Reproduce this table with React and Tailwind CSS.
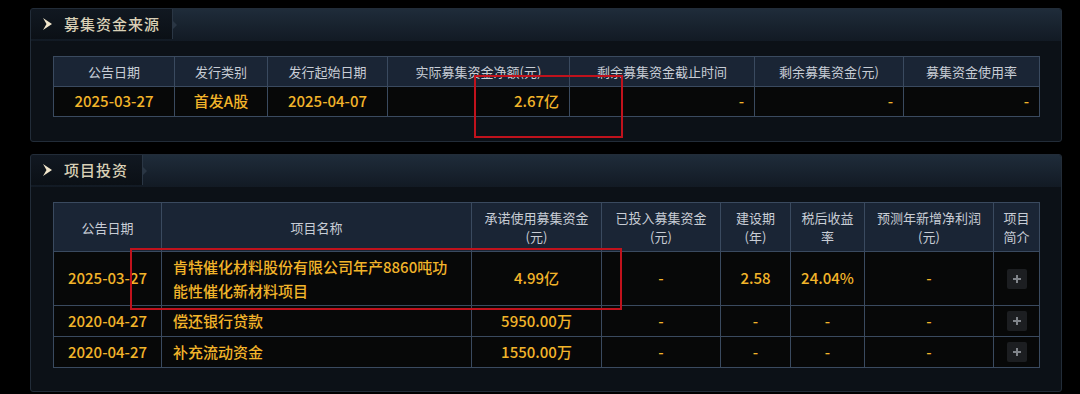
import React from "react";

const font = { fontFamily: '"Noto Sans CJK SC", "Noto Sans", sans-serif' };

function Plus() {
  return (
    <div className="mx-auto flex h-[20px] w-[20px] items-center justify-center rounded-[2px] bg-[#1c1e21]">
      <svg width="10" height="10" viewBox="0 0 10 10">
        <path d="M5 1v8M1 5h8" stroke="#80848a" strokeWidth="2" />
      </svg>
    </div>
  );
}

function PanelHeader({ title, tabW }) {
  return (
    <div className="relative flex h-[32px] bg-gradient-to-b from-[#1f2c3a] to-[#121a24]">
      <div
        className="relative flex h-[30px] items-center border-r border-[#2a3644] bg-gradient-to-b from-[#111821] to-[#0b1016] pl-[10px]"
        style={{ width: tabW }}
      >
        <svg width="14" height="14" viewBox="0 0 14 14" className="mr-[9px]">
          <path d="M2 1 L11 7 L2 13 L5.5 7 Z" fill="#f1e6cb" />
        </svg>
        <span className="text-[15px] font-medium tracking-[1px] text-[#d9d0b6]">{title}</span>
        <div className="absolute right-[-5px] top-[11px] h-0 w-0 border-y-[5px] border-l-[5px] border-y-transparent border-l-[#2a3644]" />
      </div>
    </div>
  );
}

const th = "border border-[#3a4a5f] bg-[#1a2535] text-[13px] font-normal text-[#c8cdd5] text-center leading-[19px]";
const td = "border border-[#3a4a5f] bg-[#070808] text-[15px] font-medium text-[#f2b42a]";

export default function App() {
  return (
    <div className="h-[394px] w-[1080px] overflow-hidden bg-black pt-[8px]" style={font}>
      {/* Panel 1 */}
      <div className="relative ml-[30px] h-[134px] w-[1032px] overflow-hidden rounded-[3px] border border-[#222c38] bg-[#0c1117]">
        <PanelHeader title="募集资金来源" tabW={142} />
        <div className="px-[22px] pt-[15px]">
          <table className="w-[986px] table-fixed border-collapse">
            <colgroup>
              <col className="w-[121px]" />
              <col className="w-[93px]" />
              <col className="w-[120px]" />
              <col className="w-[182px]" />
              <col className="w-[185px]" />
              <col className="w-[149px]" />
              <col className="w-[136px]" />
            </colgroup>
            <thead>
              <tr className="h-[30px]">
                <th className={th}>公告日期</th>
                <th className={th}>发行类别</th>
                <th className={th}>发行起始日期</th>
                <th className={th}>实际募集资金净额(元)</th>
                <th className={th}>剩余募集资金截止时间</th>
                <th className={th}>剩余募集资金(元)</th>
                <th className={th}>募集资金使用率</th>
              </tr>
            </thead>
            <tbody>
              <tr className="h-[30px]">
                <td className={td + " text-center"}>2025-03-27</td>
                <td className={td + " text-center"}>首发A股</td>
                <td className={td + " text-center"}>2025-04-07</td>
                <td className={td + " pr-[10px] text-right"}>2.67亿</td>
                <td className={td + " pr-[10px] text-right"}>-</td>
                <td className={td + " pr-[10px] text-right"}>-</td>
                <td className={td + " pr-[10px] text-right"}>-</td>
              </tr>
            </tbody>
          </table>
        </div>
        <div className="absolute left-[443px] top-[66px] h-[63px] w-[149px] border-2 border-[#c0121c]" />
      </div>

      {/* Panel 2 */}
      <div className="relative ml-[30px] mt-[12px] h-[238px] w-[1032px] overflow-hidden rounded-[3px] border border-[#222c38] bg-[#0c1117]">
        <PanelHeader title="项目投资" tabW={112} />
        <div className="px-[22px] pt-[15px]">
          <table className="w-[986px] table-fixed border-collapse">
            <colgroup>
              <col className="w-[108px]" />
              <col className="w-[310px]" />
              <col className="w-[130px]" />
              <col className="w-[119px]" />
              <col className="w-[70px]" />
              <col className="w-[74px]" />
              <col className="w-[129px]" />
              <col className="w-[46px]" />
            </colgroup>
            <thead>
              <tr className="h-[49px]">
                <th className={th}>公告日期</th>
                <th className={th}>项目名称</th>
                <th className={th}>承诺使用募集资金<br />(元)</th>
                <th className={th}>已投入募集资金<br />(元)</th>
                <th className={th}>建设期<br />(年)</th>
                <th className={th}>税后收益<br />率</th>
                <th className={th}>预测年新增净利润<br />(元)</th>
                <th className={th}>项目<br />简介</th>
              </tr>
            </thead>
            <tbody>
              <tr className="h-[54px]">
                <td className={td + " text-center text-[13px]"}>2025-03-27</td>
                <td className={td + " pl-[11px] text-left leading-[24px]"}>
                  肯特催化材料股份有限公司年产8860吨功<br />能性催化新材料项目
                </td>
                <td className={td + " text-center"}>4.99亿</td>
                <td className={td + " text-center"}>-</td>
                <td className={td + " text-center"}>2.58</td>
                <td className={td + " text-center"}>24.04%</td>
                <td className={td + " text-center"}>-</td>
                <td className={td}><Plus /></td>
              </tr>
              <tr className="h-[31px]">
                <td className={td + " text-center text-[13px]"}>2020-04-27</td>
                <td className={td + " pl-[11px] text-left"}>偿还银行贷款</td>
                <td className={td + " text-center"}>5950.00万</td>
                <td className={td + " text-center"}>-</td>
                <td className={td + " text-center"}>-</td>
                <td className={td + " text-center"}>-</td>
                <td className={td + " text-center"}>-</td>
                <td className={td}><Plus /></td>
              </tr>
              <tr className="h-[31px]">
                <td className={td + " text-center text-[13px]"}>2020-04-27</td>
                <td className={td + " pl-[11px] text-left"}>补充流动资金</td>
                <td className={td + " text-center"}>1550.00万</td>
                <td className={td + " text-center"}>-</td>
                <td className={td + " text-center"}>-</td>
                <td className={td + " text-center"}>-</td>
                <td className={td + " text-center"}>-</td>
                <td className={td}><Plus /></td>
              </tr>
            </tbody>
          </table>
        </div>
        <div className="absolute left-[99px] top-[93px] h-[62px] w-[492px] border-2 border-[#c0121c]" />
      </div>
    </div>
  );
}
